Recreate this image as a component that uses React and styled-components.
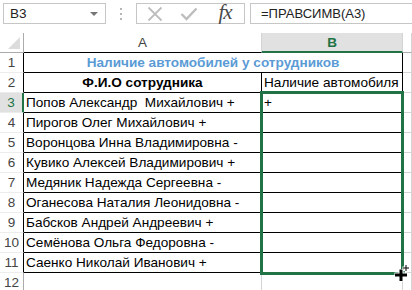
import React from 'react';
import styled, { createGlobalStyle } from 'styled-components';

const GREEN = '#217346';
const GRID = '#d4d4d4';

const Global = createGlobalStyle`
  html, body { margin: 0; padding: 0; background: #fff; overflow: hidden; }
  body { font-family: "Liberation Sans", Arial, sans-serif; }
`;

const Page = styled.div`
  width: 412px;
  height: 290px;
  overflow: hidden;
  display: flex;
  flex-direction: column;
  background: #fff;
`;

const FormulaBar = styled.div`
  display: flex;
  align-items: stretch;
  height: 27px;
  padding: 3px 0 0 3px;
  margin-bottom: 9px;
  font-family: "Liberation Sans", Arial, sans-serif;
  font-size: 13px;
  color: #222;
`;

const NameBox = styled.div`
  box-sizing: border-box;
  width: 103px;
  border: 1px solid #c6c6c6;
  display: flex;
  align-items: center;
  justify-content: space-between;
  padding: 0 6px 0 6px;
  font-size: 13.5px;
`;

const DropArrow = styled.span`
  width: 0;
  height: 0;
  border-left: 4px solid transparent;
  border-right: 4px solid transparent;
  border-top: 4px solid #777;
  margin-right: 1px;
`;

const Grip = styled.div`
  width: 30px;
  display: flex;
  flex-direction: column;
  align-items: center;
  justify-content: center;
  gap: 3px;
  & > span {
    width: 2px;
    height: 2px;
    background: #b5b5b5;
  }
`;

const FuncBox = styled.div`
  box-sizing: border-box;
  width: 109px;
  border: 1px solid #c6c6c6;
  display: flex;
  align-items: center;
  padding-left: 9px;
`;

const IconSlot = styled.div`
  width: ${(p) => p.$w}px;
  display: flex;
  align-items: center;
  justify-content: center;
`;

const Fx = styled.span`
  font-family: "Liberation Serif", "DejaVu Serif", serif;
  font-style: italic;
  font-size: 21px;
  color: #4a4a4a;
  line-height: 1;
  letter-spacing: -1px;
  margin-top: -2px;
`;

const FormulaInput = styled.div`
  box-sizing: border-box;
  flex: 1;
  margin-left: 5px;
  margin-right: -3px;
  border: 1px solid #c6c6c6;
  display: flex;
  align-items: center;
  padding-left: 10px;
  font-size: 13px;
  color: #222;
`;

const Sheet = styled.div`
  display: grid;
  grid-template-columns: 24px 238px 141px 1fr;
  grid-template-rows: repeat(13, 20px);
  font-family: "Liberation Sans", Arial, sans-serif;
`;

const Corner = styled.div`
  grid-row: 1;
  grid-column: 1;
  box-sizing: border-box;
  border-right: 1px solid #ababab;
  border-bottom: 1px solid #ababab;
  display: flex;
  align-items: flex-end;
  justify-content: flex-end;
  padding: 0 3px 3px 0;
`;

const ColHead = styled.div`
  grid-row: 1;
  grid-column: ${(p) => p.$c};
  box-sizing: border-box;
  border-right: 1px solid ${GRID};
  border-bottom: ${(p) => (p.$active ? `2px solid ${GREEN}` : `1px solid ${p.$line || '#ababab'}`)};
  background: ${(p) => (p.$active ? '#e1e1e1' : '#fff')};
  color: ${(p) => (p.$active ? GREEN : '#444')};
  font-weight: ${(p) => (p.$active ? 700 : 400)};
  font-size: 13.5px;
  display: flex;
  align-items: center;
  justify-content: center;
  padding-top: ${(p) => (p.$active ? 1 : 0)}px;
`;

const RowHead = styled.div`
  grid-row: ${(p) => p.$r};
  grid-column: 1;
  box-sizing: border-box;
  border-right: ${(p) =>
    p.$active ? `2px solid ${GREEN}` : `1px solid ${p.$inTable ? '#000' : '#ababab'}`};
  border-bottom: 1px solid #ececec;
  background: ${(p) => (p.$active ? '#e1e1e1' : '#fff')};
  color: ${(p) => (p.$active ? GREEN : '#444')};
  font-size: 13.5px;
  display: flex;
  align-items: flex-end;
  justify-content: center;
  padding-bottom: 1px;
  line-height: 17px;
  white-space: nowrap;
`;

const Cell = styled.div`
  grid-row: ${(p) => p.$r};
  grid-column: ${(p) => p.$c};
  box-sizing: border-box;
  border-right: 1px solid ${(p) => (p.$black ? '#000' : GRID)};
  border-bottom: 1px solid ${(p) => (p.$black ? '#000' : GRID)};
  display: flex;
  align-items: flex-end;
  justify-content: ${(p) => (p.$center ? 'center' : 'flex-start')};
  padding: 0 2px 1px 2px;
  font-size: 13.6px;
  line-height: 17px;
  font-weight: ${(p) => (p.$bold ? 700 : 400)};
  color: ${(p) => p.$color || '#000'};
  white-space: pre;
  min-width: 0;
`;

const Selection = styled.div`
  grid-column: 3;
  grid-row: 4 / 13;
  margin: -2px -1px -2px -2px;
  border: 3px solid ${GREEN};
  position: relative;
  z-index: 2;
  pointer-events: none;
`;

const FillHandle = styled.div`
  position: absolute;
  right: -5px;
  bottom: -5px;
  width: 5px;
  height: 5px;
  background: ${GREEN};
  border: 1px solid #fff;
`;

const CursorIcon = styled.svg`
  position: absolute;
  right: -10px;
  bottom: -10px;
  z-index: 3;
`;

const names = [
  'Попов Александр  Михайлович +',
  'Пирогов Олег Михайлович +',
  'Воронцова Инна Владимировна -',
  'Кувико Алексей Владимирович +',
  'Медяник Надежда Сергеевна -',
  'Оганесова Наталия Леонидовна -',
  'Бабсков Андрей Андреевич +',
  'Семёнова Ольга Федоровна -',
  'Саенко Николай Иванович +',
];

export default function App() {
  return (
    <Page>
      <Global />
      <FormulaBar>
        <NameBox>
          <span>B3</span>
          <DropArrow />
        </NameBox>
        <Grip>
          <span />
          <span />
          <span />
        </Grip>
        <FuncBox>
          <IconSlot $w={17}>
            <svg width="16" height="16" viewBox="0 0 16 16">
              <path d="M1.5 1.5 L14.5 14.5 M14.5 1.5 L1.5 14.5" stroke="#bdbdbd" strokeWidth="1.8" fill="none" />
            </svg>
          </IconSlot>
          <IconSlot $w={52}>
            <svg width="18" height="14" viewBox="0 0 18 14">
              <path d="M1.5 7 L6.5 12 L16.5 1.5" stroke="#bdbdbd" strokeWidth="2.4" fill="none" />
            </svg>
          </IconSlot>
          <IconSlot $w={20}>
            <Fx>fx</Fx>
          </IconSlot>
        </FuncBox>
        <FormulaInput>=ПРАВСИМВ(A3)</FormulaInput>
      </FormulaBar>

      <Sheet>
        <Corner>
          <svg width="12" height="12" viewBox="0 0 12 12">
            <polygon points="12,0 12,12 0,12" fill="#dcdcdc" />
          </svg>
        </Corner>
        <ColHead $c={2} $line="#000">A</ColHead>
        <ColHead $c={3} $active>B</ColHead>
        <ColHead $c={4} />

        <RowHead $r={2} $inTable>1</RowHead>
        <Cell $r={2} $c="2 / 4" $black $center $bold $color="#5b9bd5">
          Наличие автомобилей у сотрудников
        </Cell>
        <Cell $r={2} $c={4} />

        <RowHead $r={3} $inTable>2</RowHead>
        <Cell $r={3} $c={2} $black $center $bold>Ф.И.О сотрудника</Cell>
        <Cell $r={3} $c={3} $black>Наличие автомобиля</Cell>
        <Cell $r={3} $c={4} />

        {names.map((n, i) => (
          <React.Fragment key={i}>
            <RowHead $r={i + 4} $inTable $active={i === 0}>{i + 3}</RowHead>
            <Cell $r={i + 4} $c={2} $black>{n}</Cell>
            <Cell $r={i + 4} $c={3} $black>{i === 0 ? '+' : ''}</Cell>
            <Cell $r={i + 4} $c={4} />
          </React.Fragment>
        ))}

        <RowHead $r={13}>12</RowHead>
        <Cell $r={13} $c={2} />
        <Cell $r={13} $c={3} />
        <Cell $r={13} $c={4} />

        <Selection>
          <FillHandle />
          <CursorIcon width="18" height="18" viewBox="0 0 18 18">
            <path d="M8 5 V17.5 M1.5 11 H14.5" stroke="#fff" strokeWidth="5" fill="none" />
            <path d="M8 5.5 V17 M2 11 H14" stroke="#000" strokeWidth="3" fill="none" />
            <path d="M13 0.5 V7.5 M9.5 4 H16.5" stroke="#fff" strokeWidth="3" fill="none" />
            <path d="M13 1 V7 M10 4 H16" stroke="#000" strokeWidth="1" fill="none" />
          </CursorIcon>
        </Selection>
      </Sheet>
    </Page>
  );
}
